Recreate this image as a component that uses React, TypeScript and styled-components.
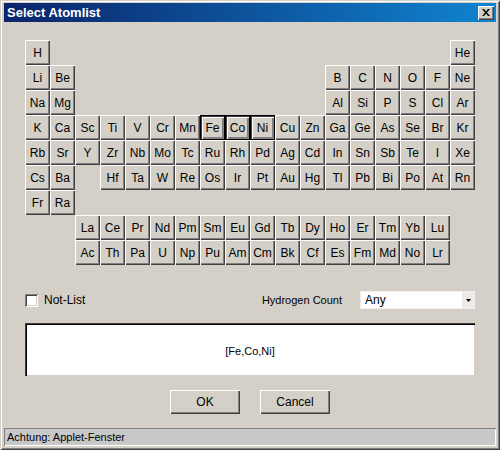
import React, { useState } from "react";
import styled, { createGlobalStyle, css } from "styled-components";

const GlobalStyle = createGlobalStyle`
  html, body {
    margin: 0;
    padding: 0;
    background: #d4d0c8;
  }
  body {
    font-family: "Liberation Sans", Arial, sans-serif;
    font-size: 12px;
    color: #000;
  }
`;

const raised = css`
  box-shadow: inset 1px 1px 0 #fff, inset -1px -1px 0 #404040,
    inset -2px -2px 0 #808080;
`;

const sunken = css`
  box-shadow: inset 1px 1px 0 #808080, inset -1px -1px 0 #fff,
    inset 2px 2px 0 #404040, inset -2px -2px 0 #d4d0c8;
`;

const Window = styled.div`
  width: 500px;
  height: 450px;
  box-sizing: border-box;
  padding: 3px 4px 4px 4px;
  display: flex;
  flex-direction: column;
  background: #d4d0c8;
  box-shadow: inset 1px 1px 0 #d4d0c8, inset -1px -1px 0 #404040,
    inset 2px 2px 0 #fff, inset -2px -2px 0 #808080;
`;

const TitleBar = styled.div`
  height: 19px;
  display: flex;
  align-items: center;
  justify-content: space-between;
  padding: 0 2px 0 3px;
  background: linear-gradient(to right, #0a246a, #1084d0);
  color: #fff;
  font-weight: bold;
  font-size: 13px;
`;

const CloseButton = styled.div`
  width: 16px;
  height: 14px;
  background: #d4d0c8;
  ${raised};
  display: flex;
  align-items: center;
  justify-content: center;
`;

const Body = styled.div`
  flex: 1;
  display: flex;
  flex-direction: column;
  padding: 18px 0 0 21px;
`;

const Table = styled.div`
  display: grid;
  grid-template-columns: repeat(18, 25px);
  grid-auto-rows: 25px;
`;

const Element = styled.div<{ $col: number; $row: number; $selected?: boolean }>`
  grid-column: ${(p) => p.$col};
  grid-row: ${(p) => p.$row};
  display: flex;
  align-items: center;
  justify-content: center;
  background: #d4d0c8;
  font-size: 12px;
  cursor: default;
  ${(p) =>
    p.$selected
      ? css`
          box-shadow: inset 0 0 0 1px #000, inset 1px 1px 0 1px #404040,
            inset 3px 3px 0 #fff, inset -3px -3px 0 #808080;
        `
      : raised};
`;

const OptionsRow = styled.div`
  width: 450px;
  height: 18px;
  margin-top: 26px;
  display: flex;
  align-items: center;
`;

const CheckBox = styled.div`
  width: 13px;
  height: 13px;
  box-sizing: border-box;
  background: #fff;
  ${sunken};
`;

const CheckLabel = styled.span`
  margin-left: 6px;
`;

const Spacer = styled.div`
  flex: 1;
`;

const HydroLabel = styled.span`
  margin-right: 18px;
  font-size: 11px;
`;

const Select = styled.div`
  width: 115px;
  height: 18px;
  box-sizing: border-box;
  background: #fff;
  display: flex;
  align-items: center;
  padding-left: 4px;
  border: 1px solid #eee;
`;

const SelectText = styled.span`
  flex: 1;
`;

const SelectArrow = styled.div`
  width: 12px;
  height: 16px;
  background: #ecebe8;
  display: flex;
  align-items: center;
  justify-content: center;
`;

const Display = styled.div`
  width: 450px;
  height: 53px;
  box-sizing: border-box;
  margin-top: 14px;
  background: #fff;
  box-shadow: inset 1px 1px 0 #404040, inset 2px 2px 0 #000,
    inset -1px -1px 0 #d4d0c8;
  display: flex;
  align-items: center;
  justify-content: center;
  padding-top: 3px;
  font-size: 11px;
`;

const Buttons = styled.div`
  width: 450px;
  margin-top: 14px;
  display: flex;
  justify-content: center;
  gap: 20px;
`;

const Button = styled.div`
  width: 70px;
  height: 24px;
  display: flex;
  align-items: center;
  justify-content: center;
  background: #d4d0c8;
  ${raised};
`;

const StatusBar = styled.div`
  height: 18px;
  display: flex;
  align-items: center;
  padding-left: 3px;
  background: #c8c8c8;
  box-shadow: inset 1px 1px 0 #808080, inset -1px -1px 0 #fff;
  font-size: 11px;
`;

type El = [string, number, number];

const ELEMENTS: El[] = [];
const addRow = (row: number, startCol: number, symbols: string) => {
  symbols.split(" ").forEach((s, i) => ELEMENTS.push([s, startCol + i, row]));
};
addRow(1, 1, "H");
addRow(1, 18, "He");
addRow(2, 1, "Li Be");
addRow(2, 13, "B C N O F Ne");
addRow(3, 1, "Na Mg");
addRow(3, 13, "Al Si P S Cl Ar");
addRow(4, 1, "K Ca Sc Ti V Cr Mn Fe Co Ni Cu Zn Ga Ge As Se Br Kr");
addRow(5, 1, "Rb Sr Y Zr Nb Mo Tc Ru Rh Pd Ag Cd In Sn Sb Te I Xe");
addRow(6, 1, "Cs Ba");
addRow(6, 4, "Hf Ta W Re Os Ir Pt Au Hg Tl Pb Bi Po At Rn");
addRow(7, 1, "Fr Ra");
addRow(8, 3, "La Ce Pr Nd Pm Sm Eu Gd Tb Dy Ho Er Tm Yb Lu");
addRow(9, 3, "Ac Th Pa U Np Pu Am Cm Bk Cf Es Fm Md No Lr");

export default function App() {
  const [selected, setSelected] = useState<string[]>(["Fe", "Co", "Ni"]);

  const toggle = (s: string) =>
    setSelected((cur) =>
      cur.includes(s) ? cur.filter((x) => x !== s) : [...cur, s],
    );

  return (
    <>
      <GlobalStyle />
      <Window>
        <TitleBar>
          <span>Select Atomlist</span>
          <CloseButton>
            <svg width="8" height="7" viewBox="0 0 8 7">
              <path
                d="M0 0h2l2 2.5L6 0h2L5 3.5 8 7H6L4 4.5 2 7H0l3-3.5z"
                fill="#000"
              />
            </svg>
          </CloseButton>
        </TitleBar>
        <Body>
          <Table>
            {ELEMENTS.map(([s, col, row]) => (
              <Element
                key={s}
                $col={col}
                $row={row}
                $selected={selected.includes(s)}
                onClick={() => toggle(s)}
              >
                {s}
              </Element>
            ))}
          </Table>
          <OptionsRow>
            <CheckBox />
            <CheckLabel>Not-List</CheckLabel>
            <Spacer />
            <HydroLabel>Hydrogen Count</HydroLabel>
            <Select>
              <SelectText>Any</SelectText>
              <SelectArrow>
                <svg width="5" height="3" viewBox="0 0 5 3">
                  <path d="M0 0h5L2.5 3z" fill="#000" />
                </svg>
              </SelectArrow>
            </Select>
          </OptionsRow>
          <Display>[{selected.join(",")}]</Display>
          <Buttons>
            <Button>OK</Button>
            <Button>Cancel</Button>
          </Buttons>
        </Body>
        <StatusBar>Achtung: Applet-Fenster</StatusBar>
      </Window>
    </>
  );
}
